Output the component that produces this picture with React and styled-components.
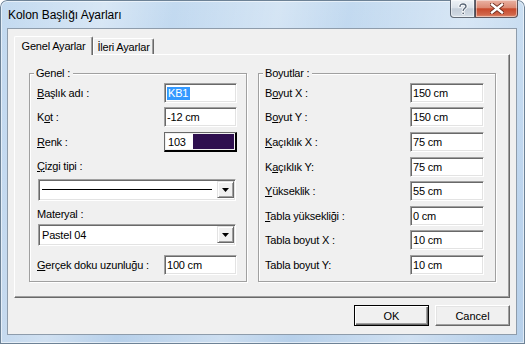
import React from 'react';
import styled, { createGlobalStyle } from 'styled-components';

const Global = createGlobalStyle`
  html, body { margin: 0; padding: 0; background: #ffffff; }
  body { font-family: "Liberation Sans", Arial, sans-serif; }
  * { box-sizing: border-box; }
`;

const Window = styled.div`
  width: 525px;
  height: 344px;
  display: flex;
  flex-direction: column;
  padding: 0 8px 9px 7px;
  border-radius: 7px 7px 0 0;
  background:
    linear-gradient(100deg, rgba(255,255,255,0) 0%, rgba(255,255,255,0.35) 18%, rgba(255,255,255,0) 30%,
      rgba(255,255,255,0.3) 48%, rgba(255,255,255,0) 60%, rgba(255,255,255,0.35) 80%, rgba(255,255,255,0) 95%),
    linear-gradient(180deg, #c3daf0 0%, #bdd5ee 50%, #b7d0ea 100%);
  box-shadow: inset 0 0 0 1px #6d8296, inset 0 0 0 2px rgba(255,255,255,0.55);
  font-size: 11px;
  letter-spacing: -0.2px;
  color: #000;
`;

const TitleBar = styled.div`
  height: 28px;
  display: flex;
  align-items: flex-start;
  flex-shrink: 0;
`;

const Title = styled.div`
  margin: 9px 0 0 1px;
  font-size: 12px;
  line-height: 13px;
  letter-spacing: -0.05px;
  color: #000;
`;

const Captions = styled.div`
  margin-left: auto;
  margin-right: -1px;
  display: flex;
`;

const CaptionButton = styled.div`
  width: ${p => p.$w}px;
  height: 18px;
  display: flex;
  align-items: center;
  justify-content: center;
  border: 1px solid rgba(50, 60, 75, 0.75);
  border-top: none;
  border-radius: ${p => p.$radius};
  background: ${p => p.$close
    ? 'linear-gradient(180deg, #eab3a4 0%, #dc8a74 45%, #c8492b 52%, #d0664a 85%, #e08d70 100%)'
    : 'linear-gradient(180deg, #eef2f6 0%, #dbe2ea 45%, #c3cdd8 52%, #cdd6e0 85%, #dce4ec 100%)'};
  box-shadow: inset 0 0 0 1px rgba(255,255,255,0.45);
`;

const Client = styled.div`
  flex: 1;
  display: flex;
  flex-direction: column;
  background: #f0f0f0;
  border: 1px solid #8e9cab;
  padding: 7px 6px 0 6px;
`;

const TabStrip = styled.div`
  display: flex;
  align-items: flex-end;
  height: 18px;
  position: relative;
  z-index: 1;
`;

const Tab = styled.div`
  width: ${p => p.$w}px;
  height: ${p => (p.$active ? 19 : 16)}px;
  margin-bottom: ${p => (p.$active ? -1 : 0)}px;
  background: #f0f0f0;
  border-top: 1px solid #ffffff;
  border-left: 1px solid #ffffff;
  border-right: 1px solid #696969;
  border-radius: 2px 2px 0 0;
  box-shadow: inset -1px 0 0 #a0a0a0;
  display: flex;
  justify-content: center;
  padding-top: ${p => (p.$active ? 3 : 2)}px;
  line-height: 13px;
  font-size: 11px;
`;

const Panel = styled.div`
  height: 244px;
  display: flex;
  gap: 11px;
  padding: 18px 11px 13px 14px;
  border: 1px solid;
  border-color: #ffffff #696969 #696969 #ffffff;
  box-shadow: inset -1px -1px 0 #a0a0a0;
`;

const Group = styled.div`
  position: relative;
  width: ${p => p.$w}px;
  height: 209px;
  border: 1px solid #a0a0a0;
  box-shadow: inset 1px 1px 0 #ffffff, 1px 1px 0 #ffffff;
  display: flex;
  flex-direction: column;
  padding: 0 ${p => p.$pr}px 0 ${p => p.$pl}px;
`;

const Legend = styled.div`
  position: absolute;
  top: -7px;
  left: 4px;
  padding: 0 3px 0 2px;
  background: #f0f0f0;
  line-height: 13px;
`;

const Row = styled.div`
  display: flex;
  align-items: center;
  justify-content: space-between;
  height: 20px;
  margin-top: ${p => p.$mt}px;
`;

const Label = styled.div`
  line-height: 14px;
  white-space: nowrap;
  margin-top: ${p => p.$mt || 0}px;
`;

const Field = styled.div`
  width: ${p => p.$w}px;
  height: 20px;
  background: #ffffff;
  border: 1px solid;
  border-color: #a0a0a0 #ffffff #ffffff #a0a0a0;
  box-shadow: inset 1px 1px 0 #696969, inset -1px -1px 0 #e3e3e3;
  display: flex;
  align-items: center;
  padding-left: 2px;
  white-space: nowrap;
`;

const Selected = styled.span`
  background: #3399ff;
  color: #ffffff;
  line-height: 13px;
  padding: 0 2px 0 1px;
`;

const ColorField = styled.div`
  width: 73px;
  height: 20px;
  display: flex;
  border: 1px solid;
  border-color: #696969 #000000 #000000 #696969;
  box-shadow: inset -1px -1px 0 #000000;
  padding: 1px 2px 2px 1px;
`;

const ColorCode = styled.div`
  width: 27px;
  background: #ffffff;
  display: flex;
  align-items: center;
  padding-left: 2px;
  border-right: 1px solid #ffffff;
`;

const Swatch = styled.div`
  flex: 1;
  background: ${p => p.$c};
`;

const Combo = styled.div`
  width: 198px;
  height: 22px;
  margin-top: ${p => p.$mt}px;
  margin-left: 1px;
  background: #ffffff;
  border: 1px solid;
  border-color: #a0a0a0 #ffffff #ffffff #a0a0a0;
  box-shadow: inset 1px 1px 0 #696969, inset -1px -1px 0 #e3e3e3;
  display: flex;
  align-items: center;
  padding: 1px 1px 2px 2px;
`;

const ComboValue = styled.div`
  flex: 1;
  display: flex;
  align-items: center;
  padding: 0 5px 0 1px;
  white-space: nowrap;
`;

const LineSample = styled.div`
  flex: 1;
  height: 1px;
  background: #000000;
`;

const DropButton = styled.div`
  width: 17px;
  align-self: stretch;
  background: #f0f0f0;
  border: 1px solid;
  border-color: #e3e3e3 #696969 #696969 #e3e3e3;
  box-shadow: inset 1px 1px 0 #ffffff, inset -1px -1px 0 #a0a0a0;
  display: flex;
  align-items: center;
  justify-content: center;
`;

const ButtonRow = styled.div`
  display: flex;
  justify-content: flex-end;
  gap: 6px;
  margin-top: 7px;
`;

const Button = styled.div`
  width: 75px;
  height: 21px;
  display: flex;
  align-items: center;
  justify-content: center;
  background: #f0f0f0;
  border: 1px solid;
  border-color: ${p => (p.$default ? '#000 #000 #000 #000' : '#ffffff #696969 #696969 #ffffff')};
  box-shadow: ${p => (p.$default
    ? 'inset 1px 1px 0 #ffffff, inset -1px -1px 0 #696969, inset -2px -2px 0 #a0a0a0'
    : 'inset -1px -1px 0 #a0a0a0, inset 1px 1px 0 #e3e3e3')};
  font-size: 11px;
  letter-spacing: 0;
`;

const Arrow = () => (
  <svg width="7" height="4" viewBox="0 0 7 4">
    <polygon points="0,0 7,0 3.5,4" fill="#000" />
  </svg>
);

const rightRows = [
  { label: <>B<u>o</u>yut X :</>, value: '150 cm', mt: 9 },
  { label: <>B<u>o</u>yut Y :</>, value: '150 cm', mt: 4 },
  { label: <><u>K</u>açıklık X :</>, value: '75 cm', mt: 5 },
  { label: <>K<u>a</u>çıklık Y:</>, value: '75 cm', mt: 5 },
  { label: <><u>Y</u>ükseklik :</>, value: '55 cm', mt: 4 },
  { label: <><u>T</u>abla yüksekliği :</>, value: '0 cm', mt: 5 },
  { label: <>Tabla boyut X :</>, value: '10 cm', mt: 4 },
  { label: <>Tabla boyut Y:</>, value: '10 cm', mt: 5 },
];

export default function App() {
  return (
    <>
      <Global />
      <Window>
        <TitleBar>
          <Title>Kolon Başlığı Ayarları</Title>
          <Captions>
            <CaptionButton $w={25} $radius="0 0 0 4px">
              <svg width="10" height="12" viewBox="0 0 10 12">
                <path d="M2 3.5 C2 1.5 3.5 1 5 1 C6.8 1 8 2 8 3.5 C8 5.2 5.2 5.5 5.2 7.6"
                  fill="none" stroke="#ffffff" strokeWidth="3.2" strokeLinecap="round" />
                <circle cx="5.2" cy="10.3" r="1.6" fill="#ffffff" />
                <path d="M2 3.5 C2 1.5 3.5 1 5 1 C6.8 1 8 2 8 3.5 C8 5.2 5.2 5.5 5.2 7.6"
                  fill="none" stroke="#5b6878" strokeWidth="1.4" strokeLinecap="round" />
                <circle cx="5.2" cy="10.3" r="0.9" fill="#5b6878" />
              </svg>
            </CaptionButton>
            <CaptionButton $w={43} $close $radius="0 0 4px 0">
              <svg width="14" height="11" viewBox="0 0 14 11">
                <path d="M2 1.5 L12 9.5 M12 1.5 L2 9.5" stroke="#6b2a1c" strokeWidth="4.2" strokeLinecap="square" />
                <path d="M2 1.5 L12 9.5 M12 1.5 L2 9.5" stroke="#ffffff" strokeWidth="2.4" strokeLinecap="square" />
              </svg>
            </CaptionButton>
          </Captions>
        </TitleBar>
        <Client>
          <TabStrip>
            <Tab $active $w={79}>Genel Ayarlar</Tab>
            <Tab $w={61}>İleri Ayarlar</Tab>
          </TabStrip>
          <Panel>
            <Group $w={218} $pl={7} $pr={9}>
              <Legend>Genel :</Legend>
              <Row $mt={9}>
                <Label><u>B</u>aşlık adı :</Label>
                <Field $w={73}><Selected>KB1</Selected></Field>
              </Row>
              <Row $mt={4}>
                <Label>K<u>o</u>t :</Label>
                <Field $w={73}>-12 cm</Field>
              </Row>
              <Row $mt={5}>
                <Label><u>R</u>enk :</Label>
                <ColorField>
                  <ColorCode>103</ColorCode>
                  <Swatch $c="#2e0f4f" />
                </ColorField>
              </Row>
              <Label $mt={7}><u>Ç</u>izgi tipi :</Label>
              <Combo $mt={6}>
                <ComboValue><LineSample /></ComboValue>
                <DropButton><Arrow /></DropButton>
              </Combo>
              <Label $mt={6}>Materyal :</Label>
              <Combo $mt={3}>
                <ComboValue>Pastel 04</ComboValue>
                <DropButton><Arrow /></DropButton>
              </Combo>
              <Row $mt={9}>
                <Label><u>G</u>erçek doku uzunluğu :</Label>
                <Field $w={73}>100 cm</Field>
              </Row>
            </Group>
            <Group $w={238} $pl={6} $pr={11}>
              <Legend>Boyutlar :</Legend>
              {rightRows.map((r, i) => (
                <Row key={i} $mt={r.mt}>
                  <Label>{r.label}</Label>
                  <Field $w={74}>{r.value}</Field>
                </Row>
              ))}
            </Group>
          </Panel>
          <ButtonRow>
            <Button $default>OK</Button>
            <Button>Cancel</Button>
          </ButtonRow>
        </Client>
      </Window>
    </>
  );
}
